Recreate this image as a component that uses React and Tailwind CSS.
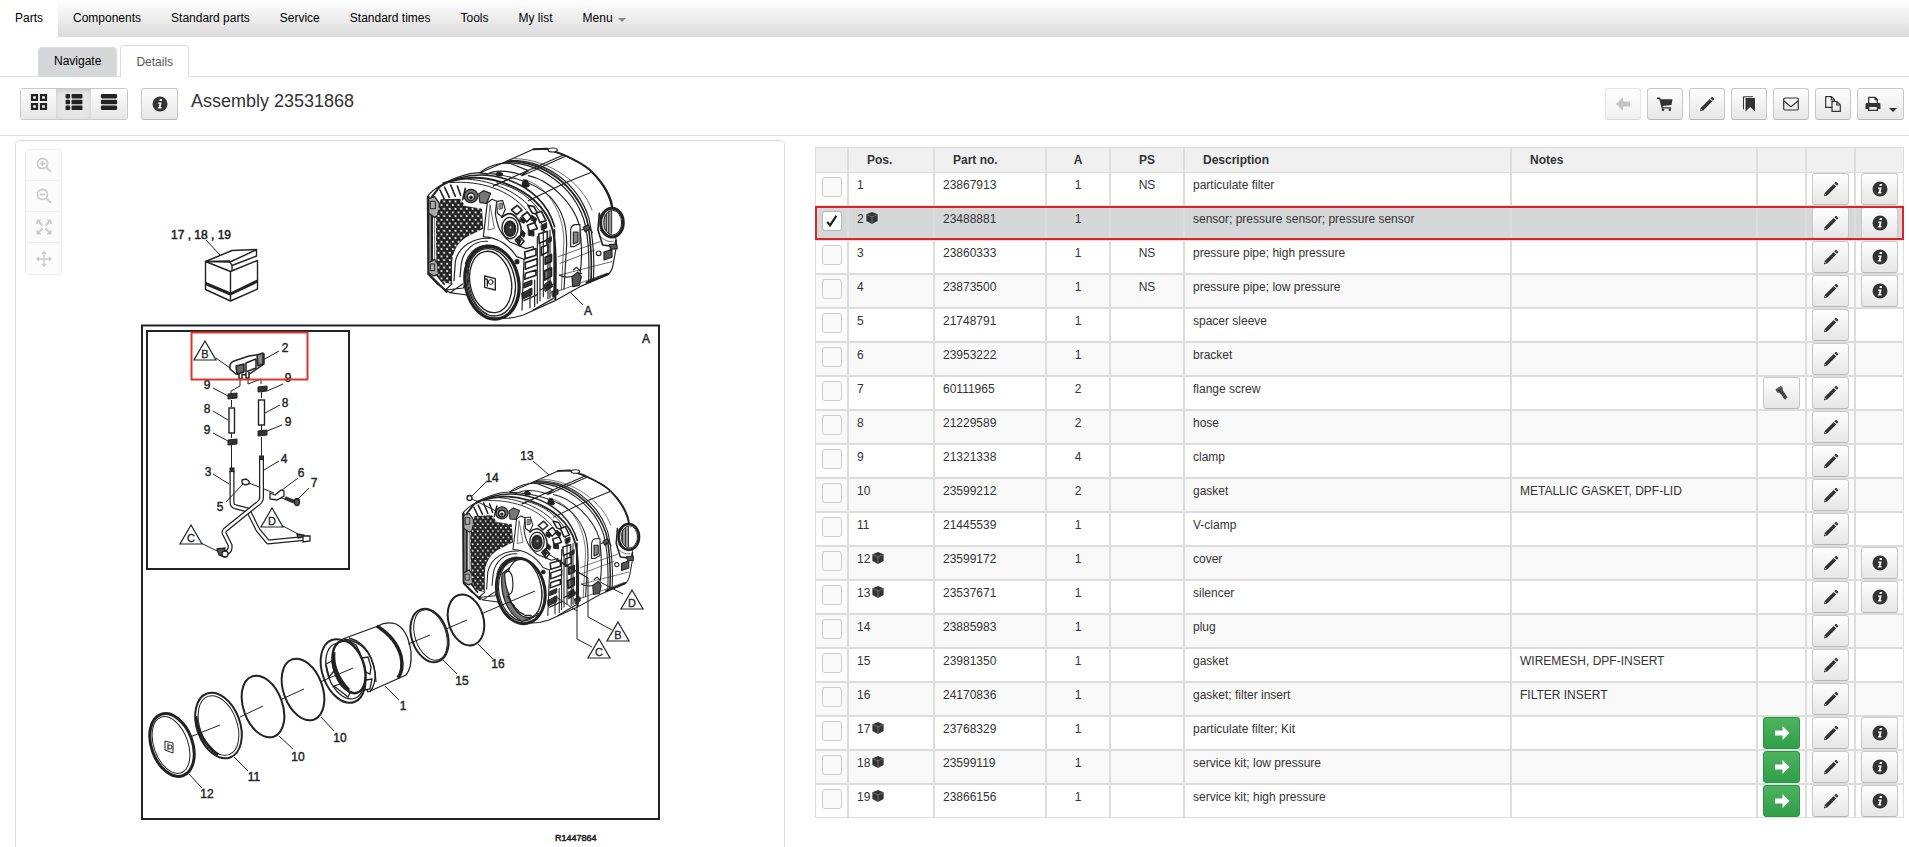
import React, { useState } from 'react';

const parts = [
  { pos: '1', no: '23867913', qty: '1', ps: 'NS', desc: 'particulate filter', info: true },
  { pos: '2', no: '23488881', qty: '1', desc: 'sensor; pressure sensor; pressure sensor', kit: true, info: true },
  { pos: '3', no: '23860333', qty: '1', ps: 'NS', desc: 'pressure pipe; high pressure', info: true },
  { pos: '4', no: '23873500', qty: '1', ps: 'NS', desc: 'pressure pipe; low pressure', info: true },
  { pos: '5', no: '21748791', qty: '1', desc: 'spacer sleeve' },
  { pos: '6', no: '23953222', qty: '1', desc: 'bracket' },
  { pos: '7', no: '60111965', qty: '2', desc: 'flange screw', action: 'screw' },
  { pos: '8', no: '21229589', qty: '2', desc: 'hose' },
  { pos: '9', no: '21321338', qty: '4', desc: 'clamp' },
  { pos: '10', no: '23599212', qty: '2', desc: 'gasket', notes: 'METALLIC GASKET, DPF-LID' },
  { pos: '11', no: '21445539', qty: '1', desc: 'V-clamp' },
  { pos: '12', no: '23599172', qty: '1', desc: 'cover', kit: true, info: true },
  { pos: '13', no: '23537671', qty: '1', desc: 'silencer', kit: true, info: true },
  { pos: '14', no: '23885983', qty: '1', desc: 'plug' },
  { pos: '15', no: '23981350', qty: '1', desc: 'gasket', notes: 'WIREMESH, DPF-INSERT' },
  { pos: '16', no: '24170836', qty: '1', desc: 'gasket; filter insert', notes: 'FILTER INSERT' },
  { pos: '17', no: '23768329', qty: '1', desc: 'particulate filter; Kit', kit: true, info: true, action: 'go' },
  { pos: '18', no: '23599119', qty: '1', desc: 'service kit; low pressure', kit: true, info: true, action: 'go' },
  { pos: '19', no: '23866156', qty: '1', desc: 'service kit; high pressure', kit: true, info: true, action: 'go' },
];

const Icon = ({ className = 'size-4', children }) => (
  <svg viewBox="0 0 16 16" className={className} fill="currentColor" aria-hidden="true">
    {children}
  </svg>
);

const GridIcon = () => (
  <Icon className="size-[18px]">
    <path fillRule="evenodd" d="M.8.8h6.400v6.400H.8zM2.800 2.800v2.400h2.400V2.800zM8.800.8h6.400v6.400H8.800zM10.800 2.800v2.400h2.400V2.800zM.8 8.800h6.400v6.400H.8zM2.800 10.800v2.400h2.400v-2.400zM8.800 8.800h6.400v6.400H8.800zM10.800 10.800v2.400h2.400v-2.400z" />
  </Icon>
);

const ListIcon = () => (
  <Icon className="size-[18px]">
    <rect x="0.500" y="0.800" width="4" height="4" rx="0.8" />
    <rect x="5.800" y="0.800" width="9.700" height="4" rx="0.8" />
    <rect x="0.500" y="6" width="4" height="4" rx="0.8" />
    <rect x="5.800" y="6" width="9.700" height="4" rx="0.8" />
    <rect x="0.500" y="11.200" width="4" height="4" rx="0.8" />
    <rect x="5.800" y="11.200" width="9.700" height="4" rx="0.8" />
  </Icon>
);

const RowsIcon = () => (
  <Icon className="size-[18px]">
    <rect x="0.800" y="0.800" width="14.400" height="4" rx="1.200" />
    <rect x="0.800" y="6" width="14.400" height="4" rx="1.200" />
    <rect x="0.800" y="11.200" width="14.400" height="4" rx="1.200" />
  </Icon>
);

const InfoIcon = () => (
  <Icon>
    <circle cx="8" cy="8" r="7.500" />
    <path fill="#fff" d="M7.800 3h2.400l-.4 2H7.400zM6.200 6.400h3.400l-1 4.800h1.100l-.3 1.400H5.700l.3-1.400h.8l.7-3.400H6z" />
  </Icon>
);

const PencilIcon = () => (
  <Icon>
    <path d="M1 15.200l.7-3.200 9-9 2.500 2.500-9 9zM11.400 2.300l1-1c.4-.4.9-.4 1.300 0l1.200 1.200c.4.400.4.900 0 1.300l-1 1z" />
    <path fill="#f3f3f3" d="M2.200 12.900l1 1-1.300.4z" />
  </Icon>
);

const ArrowIcon = ({ left }) => (
  <Icon>
    <path d={left ? 'M8 1v4.500h7v5H8V15L1 8z' : 'M8.500 1v4.600H1v4.800h7.500V15L15.500 8z'} />
  </Icon>
);

const CartIcon = () => (
  <Icon>
    <path d="M0 1.500h3l.7 1.700H15.500L14.500 9 5.600 10.100l.3 1.100h8.300v1.300H4.700L2.200 3H0z" />
    <circle cx="6" cy="13.800" r="1.300" />
    <circle cx="12.800" cy="13.800" r="1.300" />
  </Icon>
);

const BookmarkIcon = () => (
  <Icon>
    <path d="M4.500 2H14v13.500L9.200 11l-4.700 4.500zM2 .3h10v1H3v11.500l-1 .9z" />
  </Icon>
);

const MailIcon = () => (
  <Icon>
    <g fill="none" stroke="currentColor" strokeWidth="1.200">
      <rect x="0.700" y="2" width="14.600" height="12" rx="1.200" />
      <path d="M1 5l6 5q1 .8 2 0l6-5" />
    </g>
  </Icon>
);

const CopyIcon = () => (
  <Icon>
    <g fill="none" stroke="currentColor" strokeWidth="1.200">
      <path d="M7 11.300H.7V.7h5.800L9.500 3.700V5M6.300.9v3h3" />
      <path d="M7 5.500h5L15.300 8.800v6.600H7zM11.800 5.700v3.300h3.300" />
    </g>
  </Icon>
);

const PrintIcon = () => (
  <Icon>
    <path fillRule="evenodd" d="M3 .8h7.500L13 3.300V7h1c1 0 1.500.6 1.500 1.500V13H13v2H3v-2H.5V8.500C.5 7.600 1 7 2 7h1zM4.300 2v5h7.400V4.300H9.500V2zM4.300 11v2.800h7.400V11z" />
  </Icon>
);

const ScrewIcon = () => (
  <Icon>
    <path fill="#555" d="M1.500 4.500L6.500 1l2 1.300.6 3.500 4.600 6.800-2.800 2.200-5-6.700-2.800-.6z" />
    <path stroke="#222" strokeWidth="0.800" d="M3 4.700l4 2.300M6.600 8.800l2.600-1.900M8 10.800l2.600-1.900M9.400 12.700l2.600-1.900" />
  </Icon>
);

const CubeIcon = () => (
  <Icon className="inline-block h-3 w-3 align-[-1px]">
    <path d="M8 0l7.500 3v9L8 16 .5 12V3z" />
    <path fill="none" stroke="#999" strokeWidth="0.800" d="M1 3.500l7 3 7-3M8 6.500V15.500" />
  </Icon>
);

const Caret = () => <span className="inline-block border-x-4 border-t-4 border-x-transparent border-t-current" />;

const btn =
  'flex h-8 items-center justify-center rounded-[3px] border border-[#c8c8c8] border-b-[#b8b8b8] bg-linear-to-b from-white to-[#e6e6e6] text-[#333]';

const tools = [
  { label: 'Add to cart', icon: <CartIcon /> },
  { label: 'Edit', icon: <PencilIcon /> },
  { label: 'Bookmark', icon: <BookmarkIcon /> },
  { label: 'Send', icon: <MailIcon /> },
  { label: 'Copy', icon: <CopyIcon /> },
];

const TopNav = () => (
  <nav className="flex h-[37px] shrink-0 bg-linear-to-b from-white to-[#dbdbdb] text-black">
    {['Parts', 'Components', 'Standard parts', 'Service', 'Standard times', 'Tools', 'My list'].map((item) => (
      <a key={item} href="#" className={item === 'Parts' ? 'bg-white px-[15px] pt-2 leading-5' : 'px-[15px] pt-2 leading-5'}>
        {item}
      </a>
    ))}
    <a href="#" className="flex gap-[5px] px-[15px] pt-2 leading-5">
      Menu <span className="text-[#888]"><Caret /></span>
    </a>
  </nav>
);

const Tabs = () => (
  <div className="flex h-10 shrink-0 items-end border-b border-[#ddd] pl-[38px]">
    <a href="#" className="mr-[3px] h-[29px] rounded-t-[4px] border-x border-t border-[#ddd] bg-[#d5d7d9] px-[15px] pt-[3px] leading-5 text-black">
      Navigate
    </a>
    <a href="#" className="-mb-px h-8 rounded-t-[4px] border-x border-t border-[#ddd] bg-white px-[15px] pt-[6px] leading-5 text-[#555]">
      Details
    </a>
  </div>
);

const Toolbar = () => (
  <div className="flex h-[59px] shrink-0 items-start border-b border-[#ddd] pt-[11px] pr-[5px] pl-5">
    <div className="flex h-8 overflow-hidden rounded-[3px] border border-[#c8c8c8] text-[#222]">
      <button aria-label="Grid view" className="flex w-[35px] justify-center bg-linear-to-b from-white to-[#e6e6e6] pt-1">
        <GridIcon />
      </button>
      <button aria-label="List view" className="flex w-[35px] justify-center bg-[#e6e6e6] pt-1 shadow-[inset_0_2px_4px_rgba(0,0,0,0.12)]">
        <ListIcon />
      </button>
      <button aria-label="Row view" className="flex w-9 justify-center bg-linear-to-b from-white to-[#e6e6e6] pt-1">
        <RowsIcon />
      </button>
    </div>
    <button aria-label="Information" className={`${btn} ml-[13px] w-[37px]`}>
      <InfoIcon />
    </button>
    <h1 className="ml-[13px] pt-px text-lg leading-6">Assembly 23531868</h1>
    <div className="ml-auto flex gap-[6px]">
      <button aria-label="Back" disabled className={`${btn} w-9 opacity-50`}>
        <span className="text-[#888]"><ArrowIcon left /></span>
      </button>
      {tools.map((tool) => (
        <button key={tool.label} aria-label={tool.label} className={`${btn} w-9`}>
          {tool.icon}
        </button>
      ))}
      <button aria-label="Print" className={`${btn} w-[47px] gap-2`}>
        <PrintIcon />
        <span className="pt-2 leading-none"><Caret /></span>
      </button>
    </div>
  </div>
);

// Housing of the silencer; `open` shows the bore instead of the service lid
const Housing = ({ open }) => (
  <g fill="none" stroke="#222" strokeWidth="3.500" strokeLinejoin="round" strokeLinecap="round">
    {/* outer shell */}
    <path
      fill="#fff"
      d="M82 200C100 175 150 145 210 131L240 128 310 98 400 58 440 57 490 75C535 95 560 110 576 126 612 165 632 200 636 240L650 345 640 400C637 420 630 430 622 435L540 470 465 512 370 555C330 568 290 568 262 553 235 538 225 515 200 495L150 488 112 462 84 432Z"
    />
    <path strokeWidth="6" d="M400 58L440 56 490 74C530 92 560 108 577 127 610 160 634 200 638 238" />
    <ellipse cx="458" cy="60" rx="14" ry="6" fill="#fff" />
    {/* bands across the shell */}
    <path d="M310 98C420 95 520 170 552 270 566 320 568 400 566 455M330 91C440 90 532 160 566 262 580 320 584 400 580 450" />
    <path strokeWidth="5" d="M322 94C430 92 526 166 560 266 573 320 576 400 573 452" />
    <path strokeWidth="2" d="M345 86C450 88 548 160 576 240" />
    <path d="M240 129C300 130 400 150 450 200 492 245 500 290 500 345L492 478M385 137C450 150 520 220 538 285 548 350 545 400 540 430" />
    <path strokeWidth="2" d="M370 148C440 165 488 240 492 330L484 480M400 105C440 110 500 150 530 210" />
    <path d="M240 128C260 110 300 96 330 100L385 122 365 135C320 120 285 120 262 133ZM490 75L360 132 280 168M496 79L366 137M576 126L500 157 385 212" />
    <path strokeWidth="2" d="M475 380L600 335M480 435L635 395M470 485L620 430M480 400L585 360" />
    <path fill="#222" d="M288 132q8-12 20 0l-4 6h-12zM366 165l4-12q8-6 12 0l6 14q-10 10-22-2z" />
    {/* right side brackets */}
    <path fill="#fff" d="M512 350V300Q514 284 528 284H540V340L522 350Z" />
    <path fill="#888" d="M520 306h14v30l-14 6z" />
    <path d="M478 435Q500 450 545 430M545 300l22-10 10 18M520 420l10-8 10 10" />
    <path fill="#555" d="M516 440l18-14 10 14-6 26-20 4zM550 292l16-8 4 12-14 10z" />
    <path strokeWidth="7" d="M560 458L624 432" />
    {/* outlet */}
    <path fill="#fff" strokeWidth="5" d="M598 250L594 300 608 345 645 350 648 330" />
    <ellipse cx="636" cy="278" rx="34" ry="43" fill="#fff" strokeWidth="9" />
    <ellipse cx="638" cy="278" rx="27" ry="37" fill="#fff" strokeWidth="3" />
    <path strokeWidth="3" d="M615 255V298M620 250V304M625 246V308M630 244V312M635 244V310M598 262q12-28 40-30" />
    <path strokeWidth="2" d="M600 300q14 22 42 20M604 322q16 16 36 12" />
    <path fill="#555" d="M612 366l24-8v24l-24 8zM628 344l22-2 2 14-20 2z" />
    <circle cx="596" cy="370" r="7" />
    {/* front flange */}
    <path strokeWidth="6" d="M130 160C200 140 240 138 300 155 380 180 440 230 458 300 470 350 468 420 466 508" />
    <path strokeWidth="5" d="M112 174C180 132 250 125 320 148 395 172 445 225 464 290" />
    <path strokeWidth="3" d="M175 146C250 146 330 170 385 225 425 265 440 310 445 350M150 158C240 150 330 180 378 240" />
    <path strokeWidth="3" d="M290 158C350 172 400 205 430 262M280 168L340 142" />
    {/* left edge */}
    <path strokeWidth="6" d="M86 200V432L140 486M118 172L96 200V415L132 462" />
    <path strokeWidth="2" d="M92 240V410M104 210V400M110 262V400" />
    <path fill="#aaa" strokeWidth="4" d="M86 206l18-6 14 20v34l-14 8-18-12zM86 398l18-10 12 18v26l-14 6-16-10z" />
    <path strokeWidth="3" d="M92 214h14v22h-14zM92 402h12v20h-12z" />
    <path strokeWidth="5" d="M120 180l14 30M134 172l14 30M152 165l14 34M172 168l10 28M196 175l-8 34" />
    {/* perforated plate */}
    <path
      fill="url(#holes)"
      stroke="none"
      d="M122 208L180 206 196 228 246 236 250 296 205 318C175 335 158 360 156 400V462L124 456 112 424 108 330V268Z"
    />
    {/* top fittings */}
    <circle cx="213" cy="198" r="20" fill="#777" strokeWidth="4" />
    <circle cx="213" cy="200" r="11" fill="#fff" strokeWidth="5" />
    <circle cx="213" cy="202" r="4" fill="#222" />
    <path fill="#777" d="M236 192l14-10 22 8-12 30-20-2z" />
    {/* centre rib and sensor boss */}
    <path fill="#fff" d="M250 320L262 218 276 208 290 214 286 250C292 290 300 310 330 336L378 356 400 350V372L372 388 350 380C320 335 285 322 250 320Z" />
    <path fill="#fff" strokeWidth="2" d="M270 225L264 300 282 296Z" />
    <path fill="#fff" d="M290 214l18-2 8 26-10 22-14-10z" />
    <path fill="#888" strokeWidth="2" d="M298 220l10 0v16l-10 2z" />
    <ellipse cx="330" cy="294" rx="24" ry="32" fill="#fff" strokeWidth="4" />
    <ellipse cx="330" cy="296" rx="16" ry="22" fill="#333" strokeWidth="6" />
    <circle cx="332" cy="292" r="5" fill="#aaa" strokeWidth="2" />
    <path strokeWidth="5" d="M306 262q30-28 52 14 14 34-4 56M346 330l12-12 14 16-12 14z" />
    {/* ribs round the front edge */}
    <path fill="#fff" strokeWidth="5" d="M334 240l18-14 14 14-16 14zM366 258l16-12 12 16-14 14zM384 226l18 4 14 26-20-8zM382 286l22-8 8 18-24 8z" />
    <path fill="#222" strokeWidth="3" d="M362 262l14 8-4 10-12-6zM396 256l14 10-4 12-12-8zM386 300l16 4v14l-16-2zM424 286l16-8v16l-14 6zM350 326l14 4-6 12zM366 300l10 10-4 12-10-8z" />
    <path fill="#fff" strokeWidth="5" d="M408 250l16-6 14 28-18 6zM416 312l26-8v26l-24 10zM424 352l20-8v22l-20 10z" />
    <path fill="#777" strokeWidth="6" d="M432 424l22-10v24l-20 12zM436 382l18-8v20l-18 8z" />
    <path fill="#333" strokeWidth="3" d="M440 328l14-8v14l-14 8zM434 462l18-10 6 18-22 14zM456 484l18-6v14l-16 8zM372 460l24-10v14l-24 10zM366 490l30-16v20l-28 14z" />
    <path fill="#fff" strokeWidth="5" d="M374 366l34-10v20l-32 10zM376 398l36-12v18l-36 14zM376 430l32-10v16l-34 12z" />
    <path d="M412 320V520M420 340V512M430 300V500M444 350V506M372 388L366 540M390 476V534M404 450V530M450 300V504" />
    <path strokeWidth="6" d="M463 300V500" />
    <path strokeWidth="4" d="M372 512L412 494M420 480L460 462M400 540L460 505" />
    <circle cx="351" cy="395" r="6" fill="#222" />
    {/* lid surround */}
    <path d="M270 325C220 322 175 350 166 395L162 452M262 334C220 332 190 362 184 400L180 440M262 345C225 348 205 370 196 402M156 462L136 480 190 474 196 458M150 488L188 462" />
    <ellipse cx="276" cy="458" rx="80" ry="110" transform="rotate(-11 276 458)" fill="#fff" strokeWidth="10" />
    <ellipse cx="274" cy="457" rx="71" ry="102" transform="rotate(-11 274 457)" fill="#fff" strokeWidth="4" />
    {open ? (
      <>
        <path fill="#777" strokeWidth="4" d="M214 400C206 460 224 530 280 560L340 535C290 520 250 480 240 440V380Z" />
        <ellipse cx="288" cy="450" rx="56" ry="98" transform="rotate(-11 288 450)" fill="#fff" strokeWidth="4" />
        <path fill="#fff" strokeWidth="4" d="M222 400q18-20 26 14 6 50-10 56-14-20-16-70z" />
        <path strokeWidth="5" d="M232 476l10 14M240 494l14 14M254 512l14 12M270 528l16 8M290 540l20 0" />
      </>
    ) : (
      <>
        <ellipse cx="272" cy="456" rx="62" ry="93" transform="rotate(-11 272 456)" fill="#fff" strokeWidth="4" />
        <path strokeWidth="4" d="M254 438l32 8v34l-32-8zM262 448v20M262 448l-8-2" />
        <circle cx="272" cy="456" r="7" strokeWidth="3" />
        <path strokeWidth="3" d="M208 405C196 460 216 530 262 552" />
      </>
    )}
  </g>
);

const Tag = ({ x, y, children }) => (
  <g>
    <path d={`M${x} ${y - 11}L${x + 11} ${y + 8}H${x - 11}Z`} fill="none" stroke="#222" strokeWidth="1.200" />
    <text x={x} y={y + 6} textAnchor="middle" className="text-[11px]" stroke="#222" strokeWidth="0.300">
      {children}
    </text>
  </g>
);

const labels = [
  [588, 315, 'A'], [646, 343, 'A'], [285, 352, '2'], [207, 389, '9'], [288, 382, '9'],
  [207, 413, '8'], [285, 407, '8'], [207, 434, '9'], [288, 426, '9'], [208, 476, '3'],
  [284, 463, '4'], [220, 511, '5'], [301, 477, '6'], [314, 487, '7'], [527, 460, '13'],
  [492, 482, '14'], [498, 668, '16'], [462, 685, '15'], [403, 710, '1'], [340, 742, '10'],
  [298, 761, '10'], [254, 781, '11'], [207, 798, '12'],
];

const AssemblyDrawing = () => (
  <svg
    viewBox="16 141 768 706"
    preserveAspectRatio="xMinYMin slice"
    className="absolute inset-0 size-full"
    role="img"
    aria-label="Exploded view of assembly 23531868"
  >
    <defs>
      <pattern id="holes" width="17" height="22" patternUnits="userSpaceOnUse">
        <rect width="17" height="22" fill="#222" />
        <path fill="#fff" d="M2 3l5-1 2 5-5 2zM10 14l5-1 2 5-5 2z" />
      </pattern>
    </defs>

    {/* frames */}
    <g fill="none" stroke="#222" strokeWidth="2">
      <rect x="142" y="325.500" width="517" height="493.500" />
      <rect x="147" y="331" width="202" height="238" />
    </g>

    {/* service kit box */}
    <g fill="#fff" stroke="#222" strokeWidth="1.400" strokeLinejoin="round">
      <path d="M205.500 261.500L230.500 271.500 257.500 260.500V289L230.500 301 205.500 289.500Z" />
      <path d="M230.500 271.500V301" />
      <path d="M205.500 283.500L230.500 294 257.500 281" strokeWidth="3" fill="none" />
      <path d="M205.500 261.500L232 250.500 256.500 249.500V256L232 265.500 230 262Z" />
      <path d="M230 262L256 250M205.500 261.500L230 261M232 265.500V271" />
    </g>

    <g transform="translate(400 130) scale(0.3333)">
      <Housing />
    </g>
    <g transform="translate(438 453.500) scale(0.3)">
      <Housing open />
    </g>

    {/* pressure sensor with hoses, clamps and pipes */}
    <g fill="#fff" stroke="#222" strokeWidth="1.500" strokeLinejoin="round">
      <path d="M230 365Q231 362 234 361L249 356 264 354V364L248 375 236 374 230 369Z" />
      <path d="M236 366l8-2v8l-7 2z" fill="#666" />
      <path d="M246 363l10-4v9l-10 4z" />
      <path d="M257 355l6-2v11l-5 2z" fill="#888" />
      <path d="M239 374v5h3v-5M246 373v5h3v-6" />
    </g>
    <g fill="none" stroke="#222">
      <path d="M240 379V386L231 391V396M248 378V384L261 379V384M231.500 400V407M231.500 433V438M231.500 445V468M261.500 392V398M261.500 425V430M261.500 437V456" />
      <path d="M249 483L274 493M277 497L285 499" />
    </g>
    <g fill="#fff" stroke="#222" strokeWidth="1.400">
      <rect x="229" y="408" width="5.500" height="25" />
      <rect x="258.500" y="400" width="6" height="25" />
    </g>
    <g fill="#333" stroke="#222">
      <path d="M228 394l9-1v5l-9 1zM228 440l9-1v5l-9 1zM258 387l9-1v5l-9 1zM258 431l9-1v5l-9 1z" />
      <rect x="230" y="468" width="4" height="4" />
      <rect x="259.500" y="456" width="4" height="4" />
    </g>
    <g fill="none" strokeLinejoin="round">
      <path d="M232 471V503Q232 506 236 507L248 510 258 530 268 542 309 538" stroke="#222" strokeWidth="5" />
      <path d="M232 472V503Q232 506 236 507L248 510 258 530 268 542 309 538" stroke="#fff" strokeWidth="2.500" />
      <path d="M261.500 459V498Q261 502 256 505L225 530Q223 532 225 535L230 545Q231 551 226 553" stroke="#222" strokeWidth="5" />
      <path d="M261.500 460V498Q261 502 256 505L225 530Q223 532 225 535L230 545Q231 551 226 553" stroke="#fff" strokeWidth="2.500" />
    </g>
    <g fill="#fff" stroke="#222" strokeWidth="1.300">
      <path d="M217 549l8-1v9l-6-2z" fill="#555" />
      <path d="M297 534l7 1v2l-6 1z" fill="#555" />
      <path d="M303 536h7v5l-7 1z" />
      <circle cx="225" cy="554" r="3" />
      <path d="M242 480l4-1 3 2v3l-4 1-3-2z" />
      <path d="M270 493l5 2 6-5 3 1v5l-7 4-7-1z" />
      <path d="M285 498l10 4" strokeWidth="4" stroke="#333" />
      <ellipse cx="297" cy="502" rx="2.500" ry="3.500" fill="#555" />
    </g>

    {/* cover, clamp and gaskets */}
    <g fill="#fff" stroke="#222">
      <ellipse cx="172" cy="745" rx="20.500" ry="32.500" transform="rotate(-20 172 745)" strokeWidth="3" />
      <ellipse cx="171" cy="745" rx="17" ry="29.500" transform="rotate(-20 171 745)" strokeWidth="1" />
      <path d="M165 741l8 2v10l-8-3zM168 743v7" />
      <circle cx="170" cy="747" r="2" />
      <ellipse cx="218.500" cy="725.500" rx="21.500" ry="34" transform="rotate(-20 218.500 725.500)" strokeWidth="2" />
      <ellipse cx="218.500" cy="725.500" rx="18.500" ry="31" transform="rotate(-20 218.500 725.500)" strokeWidth="1" />
      <path d="M196 716Q197 738 218 755" fill="none" strokeWidth="3" />
      <ellipse cx="263" cy="706.500" rx="19.500" ry="32" transform="rotate(-20 263 706.500)" strokeWidth="2" />
      <ellipse cx="303" cy="689.500" rx="19.500" ry="32" transform="rotate(-20 303 689.500)" strokeWidth="2" />
      <ellipse cx="429.500" cy="635.500" rx="18" ry="27.500" transform="rotate(-18 429.500 635.500)" strokeWidth="2" />
      <ellipse cx="430.500" cy="635" rx="15.500" ry="26" transform="rotate(-18 430.500 635)" strokeWidth="1" />
      <ellipse cx="466" cy="620" rx="17.500" ry="26" transform="rotate(-16 466 620)" strokeWidth="2" />
    </g>

    {/* filter insert */}
    <g fill="#fff" stroke="#222" strokeWidth="1.300">
      <path d="M340 640L378 626Q386 621 396 624 408 630 411 652 412 668 406 675L368 692Z" />
      <path d="M377 626Q396 638 401 656 404 670 398 678" fill="none" strokeWidth="3.500" />
      <path d="M344 639Q370 642 375 672 376 684 370 692" fill="none" />
      <path d="M349 638Q374 645 376 682" fill="none" />
      <ellipse cx="343" cy="671" rx="20.500" ry="33" transform="rotate(-20 343 671)" strokeWidth="2" />
      <ellipse cx="345" cy="671" rx="17.500" ry="29" transform="rotate(-20 345 671)" />
      <path d="M349 641l7 4 4 8-4 1-8-9zM362 658l6-1 3 10-1 7-6-3zM366 680l6-1-2 10-5 1zM326 664l6-3 2 10-5 6zM334 686l6-2 10 9-2 4z" />
      <ellipse cx="349" cy="667" rx="15" ry="27" transform="rotate(-18 349 667)" strokeWidth="2.500" />
      <path d="M334 652Q332 672 349 690" fill="none" strokeWidth="3" />
    </g>

    {/* centre line */}
    <path
      stroke="#222"
      d="M190 737L220 725M240 717L263 706M282 699L304 689M320 682L353 668M408 644L430 635M446 629L467 620M481 614L535 591M470 498L496 511"
    />

    {/* leader lines */}
    <g fill="none" stroke="#222">
      <path d="M206 240L220 255M570 292L583 305M279 351L263 360M216 358L230 368M213 388L228 396M283 384L267 391M213 411L228 420M280 405L265 413M213 433L228 441M282 425L267 431M213 474L229 484M279 461L264 470M226 502L243 484M298 478L282 490M309 488L297 500M201 543L217 551M283 526L298 534M533 461L549 475M486 482L471 497M478 644L493 659M442 659L457 674M385 686L399 700M321 717L334 731M279 736L293 749M234 757L248 771M188 773L202 788" />
      <path d="M556 560L588 578V617L612 630M545 552L588 578M577 595V639L592 647M556 597L577 611M602 583L623 594" />
      <circle cx="469.500" cy="498" r="2.500" fill="#fff" strokeWidth="1.300" />
    </g>

    <g fill="#222" fontFamily="'Liberation Sans', Arial, sans-serif">
      <Tag x={205} y={352}>B</Tag>
      <Tag x={191} y={536}>C</Tag>
      <Tag x={272} y={519}>D</Tag>
      <Tag x={632} y={601}>D</Tag>
      <Tag x={618} y={633}>B</Tag>
      <Tag x={599} y={650}>C</Tag>
      {labels.map(([x, y, text]) => (
        <text key={`${x}-${y}`} x={x} y={y} textAnchor="middle" className="text-[12px]" stroke="#222" strokeWidth="0.400">
          {text}
        </text>
      ))}
      <text x="171" y="239" className="text-[12px]" stroke="#222" strokeWidth="0.500">17 , 18 , 19</text>
      <text x="555" y="841" className="text-[9px]" stroke="#222" strokeWidth="0.500">R1447864</text>
    </g>

    <rect x="191.500" y="332.500" width="116" height="47" fill="none" stroke="#e0342f" strokeWidth="2" />
  </svg>
);

const zoomButtons = [
  { label: 'Zoom in', icon: <><circle cx="6.500" cy="6.500" r="5" /><path d="M10.500 10.500L15 15M4 6.500h5M6.500 4v5" /></> },
  { label: 'Zoom out', icon: <><circle cx="6.500" cy="6.500" r="5" /><path d="M10.500 10.500L15 15M4 6.500h5" /></> },
  {
    label: 'Fit to window',
    icon: (
      <>
        <path d="M2 2l4.500 4.500M14 2L9.500 6.500M2 14l4.500-4.500M14 14L9.500 9.500" />
        <path d="M1 5V1h4zM15 5V1h-4zM1 11v4h4zM15 11v4h-4z" fill="currentColor" strokeWidth="1" />
      </>
    ),
  },
  { label: 'Move', icon: <path strokeWidth="1.400" d="M8 1v14M1 8h14M6 3l2-2 2 2M6 13l2 2 2-2M3 6L1 8l2 2M13 6l2 2-2 2" /> },
];

const DrawingPanel = () => (
  <div className="relative mt-1 overflow-hidden rounded-t-[5px] border border-b-0 border-[#ddd]">
    <AssemblyDrawing />
    <div className="absolute top-2 left-[9px] flex w-[37px] flex-col rounded-[3px] border border-[#eee] bg-[#fcfcfc]">
      {zoomButtons.map((z) => (
        <button key={z.label} aria-label={z.label} className="flex h-[31px] items-center justify-center border-b border-[#f0f0f0] text-[#ccc] last:border-b-0">
          <svg viewBox="0 0 16 16" className="size-4" fill="none" stroke="currentColor" strokeWidth="1.800" aria-hidden="true">
            {z.icon}
          </svg>
        </button>
      ))}
    </div>
  </div>
);

const td = 'border border-[#ddd] px-2 py-0 align-top leading-6';
const th = 'border border-b-0 border-[#ddd] px-[18px] text-left leading-6';

const PartsTable = () => {
  const [checked, setChecked] = useState(['2']);

  const toggle = (pos) => {
    setChecked(checked.includes(pos) ? checked.filter((p) => p !== pos) : [...checked, pos]);
  };

  return (
    <table className="w-full table-fixed border-separate border-spacing-0">
      <thead>
        <tr className="h-[25px] bg-[#f0f0f0]">
          <th className="w-[33px] border border-b-0 border-[#ddd]" />
          <th className={`${th} w-[86px]`}>Pos.</th>
          <th className={`${th} w-[112px]`}>Part no.</th>
          <th className="w-16 border border-b-0 border-[#ddd] leading-6">A</th>
          <th className="w-[74px] border border-b-0 border-[#ddd] leading-6">PS</th>
          <th className={th}>Description</th>
          <th className={`${th} w-[246px]`}>Notes</th>
          <th className="w-[49px] border border-b-0 border-[#ddd]" />
          <th className="w-[49px] border border-b-0 border-[#ddd]" />
          <th className="w-[49px] border border-b-0 border-[#ddd]" />
        </tr>
      </thead>
      <tbody>
        {parts.map((part) => {
          const on = checked.includes(part.pos);
          return (
            <tr
              key={part.pos}
              className={
                on
                  ? 'relative z-10 h-[34px] bg-[#d5d7d9] outline-2 -outline-offset-2 outline-[#d9252a]'
                  : 'h-[34px] even:bg-[#f9f9f9]'
              }
            >
              <td className="border border-[#ddd] p-0 align-top">
                <label className="relative mt-1 ml-[6px] block size-5">
                  <input
                    type="checkbox"
                    aria-label={`Select ${part.desc}`}
                    checked={on}
                    onChange={() => toggle(part.pos)}
                    className="block size-5 appearance-none rounded-[3px] border border-[#ccc] bg-[#fafafa] checked:border-[#adb8c0] checked:bg-white"
                  />
                  {on && (
                    <svg viewBox="0 0 16 16" className="pointer-events-none absolute inset-[3px] size-[14px]" aria-hidden="true">
                      <path d="M2.500 9l3.300 4L13 2" fill="none" stroke="#222" strokeWidth="2.600" />
                    </svg>
                  )}
                </label>
              </td>
              <td className={td}>
                {part.pos}
                {part.kit && <span className="ml-[2px]"><CubeIcon /></span>}
              </td>
              <td className={td}>{part.no}</td>
              <td className={`${td} text-center`}>{part.qty}</td>
              <td className={`${td} text-center`}>{part.ps}</td>
              <td className={td}>{part.desc}</td>
              <td className={td}>{part.notes}</td>
              <td className="border border-[#ddd] p-0 pl-[5px]">
                {part.action === 'go' && (
                  <button
                    aria-label={`Open ${part.desc}`}
                    className="flex h-8 w-[37px] items-center justify-center rounded-[3px] border border-[#2d9344] bg-linear-to-b from-[#4db35f] to-[#2f9e48] text-white"
                  >
                    <ArrowIcon />
                  </button>
                )}
                {part.action === 'screw' && (
                  <button aria-label="Standard part" className={`${btn} w-[37px]`}>
                    <ScrewIcon />
                  </button>
                )}
              </td>
              <td className="border border-[#ddd] p-0 pl-[5px]">
                <button aria-label={`Edit ${part.desc}`} className={`${btn} w-[37px]`}>
                  <PencilIcon />
                </button>
              </td>
              <td className="border border-[#ddd] p-0 pl-[5px]">
                {part.info && (
                  <button aria-label={`Information about ${part.desc}`} className={`${btn} w-[37px]`}>
                    <InfoIcon />
                  </button>
                )}
              </td>
            </tr>
          );
        })}
      </tbody>
    </table>
  );
};

const App = () => (
  <div className="flex h-screen flex-col overflow-hidden bg-white font-['Liberation_Sans',Arial,sans-serif] text-xs text-[#333]">
    <TopNav />
    <Tabs />
    <Toolbar />
    <main className="grid min-h-0 flex-1 grid-cols-[770fr_1089fr] gap-[30px] pr-[5px] pl-[15px]">
      <DrawingPanel />
      <div className="pt-[11px]">
        <PartsTable />
      </div>
    </main>
  </div>
);

export default App;
